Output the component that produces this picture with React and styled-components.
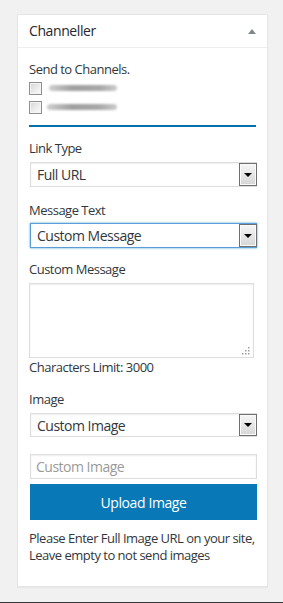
import React from "react";
import styled, { createGlobalStyle } from "styled-components";

const Global = createGlobalStyle`
  html, body { margin: 0; padding: 0; }
  body {
    background: #f1f1f1;
    font-family: "Open Sans", "Noto Sans", sans-serif;
    color: #23282d;
  }
  * { box-sizing: border-box; }
`;

const Page = styled.div`
  display: flex;
  flex-direction: column;
  min-height: 603px;
`;

const Main = styled.div`
  flex: 1;
  padding: 14px 16px 0 17px;
`;

const FooterLine = styled.div`
  height: 1px;
  background: #32373c;
`;

const Panel = styled.section`
  width: 251px;
  background: #fff;
  border: 1px solid #e5e5e5;
  box-shadow: 0 1px 1px rgba(0, 0, 0, 0.04);
`;

const Header = styled.div`
  height: 33px;
  border-bottom: 1px solid #eee;
  display: flex;
  align-items: center;
  justify-content: space-between;
  padding: 0 11px 0 11px;
`;

const Title = styled.h3`
  margin: 0;
  font-size: 14px;
  font-weight: 400;
  line-height: 18px;
  letter-spacing: -0.4px;
  color: #23282d;
`;

const Toggle = styled.span`
  width: 0;
  height: 0;
  border-left: 4px solid transparent;
  border-right: 4px solid transparent;
  border-bottom: 5px solid #82878c;
  margin-top: 1px;
`;

const Content = styled.div`
  padding: 12px 10px 22px 11px;
  display: flex;
  flex-direction: column;
  align-items: flex-start;
`;

const Text = styled.div`
  font-size: 13px;
  line-height: ${(p) => p.$lh || 18}px;
  letter-spacing: -0.5px;
  white-space: nowrap;
  color: #32373c;
  margin-top: ${(p) => p.$top || 0}px;
`;

const CheckRow = styled.label`
  display: flex;
  align-items: flex-start;
  height: 19px;
  padding-top: 4px;
`;

const Check = styled.span`
  width: 13px;
  height: 13px;
  border: 1px solid #8e8f8f;
  box-shadow: inset 0 0 0 1px #f4f4f4;
  background: linear-gradient(135deg, #d4d4d4 0%, #ececec 55%, #fbfbfb 100%);
  flex: none;
`;

const Smear = styled.span`
  width: ${(p) => p.$w}px;
  height: 6px;
  margin: 3px 0 0 ${(p) => p.$ml}px;
  border-radius: 3px;
  background: linear-gradient(90deg, #cfcfcf 0%, #9f9f9f 35%, #a8a8a8 75%, #cccccc 100%);
  filter: blur(1.2px);
`;

const Divider = styled.hr`
  width: 227px;
  height: 2px;
  margin: 9px 0 0 0;
  border: 0;
  background: #0073aa;
`;

const Select = styled.div`
  width: 227px;
  height: ${(p) => p.$h || 25}px;
  margin: ${(p) => p.$top}px 0 0 1px;
  display: flex;
  align-items: center;
  justify-content: space-between;
  padding: 0 0 0 6px;
  background: #fff;
  border: 1px solid ${(p) => (p.$focus ? "#5b9dd9" : "#ddd")};
  box-shadow: ${(p) =>
    p.$focus
      ? "0 0 2px rgba(30,140,190,.8)"
      : "inset 0 1px 2px rgba(0,0,0,.07)"};
  font-size: 14px;
  letter-spacing: -0.5px;
  color: #32373c;
`;

const DropButton = styled.span`
  width: 18px;
  height: 100%;
  margin-right: -1px;
  border: 1px solid #6f6f6f;
  box-shadow: inset 0 0 0 1px #fafafa;
  background: linear-gradient(180deg, #f6f6f6 0%, #e6e6e6 50%, #d6d6d6 100%);
  display: flex;
  align-items: center;
  justify-content: center;
  &::after {
    content: "";
    width: 0;
    height: 0;
    border-left: 4px solid transparent;
    border-right: 4px solid transparent;
    border-top: 4px solid #000;
  }
`;

const TextBox = styled.div`
  width: 225px;
  height: 75px;
  margin-top: 5px;
  border: 1px solid #ddd;
  box-shadow: inset 0 1px 2px rgba(0, 0, 0, 0.07);
  background: #fff;
  display: flex;
  align-items: flex-end;
  justify-content: flex-end;
  padding: 0 3px 2px 0;
`;

const Input = styled.input`
  width: 227px;
  height: 25px;
  margin: 17px 0 0 1px;
  padding: 0 5px;
  border: 1px solid #ddd;
  box-shadow: inset 0 1px 2px rgba(0, 0, 0, 0.07);
  font-family: inherit;
  font-size: 14px;
  letter-spacing: -0.5px;
  color: #32373c;
  outline: none;
  &::placeholder { color: #9a9a9a; }
`;

const Button = styled.button`
  width: 227px;
  height: 36px;
  margin: 5px 0 0 1px;
  border: 0;
  background: #0879b6;
  color: #fff;
  font-family: inherit;
  font-size: 14px;
  letter-spacing: -0.4px;
  padding: 0;
  cursor: pointer;
`;

const Grip = () => (
  <svg width="8" height="8" viewBox="0 0 8 8">
    {[
      [6, 0],
      [3, 3],
      [6, 3],
      [0, 6],
      [3, 6],
      [6, 6],
    ].map(([x, y], i) => (
      <rect key={i} x={x} y={y} width="1.5" height="1.5" fill="#9e9e9e" />
    ))}
  </svg>
);

export default function App() {
  return (
    <Page>
      <Global />
      <Main>
        <Panel>
          <Header>
            <Title>Channeller</Title>
            <Toggle />
          </Header>
          <Content>
            <Text>Send to Channels.</Text>
            <CheckRow>
              <Check />
              <Smear $w={68} $ml={7} />
            </CheckRow>
            <CheckRow>
              <Check />
              <Smear $w={70} $ml={5} />
            </CheckRow>
            <Divider />

            <Text $top={12}>Link Type</Text>
            <Select $top={5}>
              <span>Full URL</span>
              <DropButton />
            </Select>

            <Text $top={14}>Message Text</Text>
            <Select $top={4} $focus>
              <span>Custom Message</span>
              <DropButton />
            </Select>

            <Text $top={12}>Custom Message</Text>
            <TextBox>
              <Grip />
            </TextBox>
            <Text>Characters Limit: 3000</Text>

            <Text $top={14}>Image</Text>
            <Select $top={5} $h={24}>
              <span>Custom Image</span>
              <DropButton />
            </Select>

            <Input placeholder="Custom Image" />
            <Button>Upload Image</Button>

            <Text $top={10} $lh={17}>
              Please Enter Full Image URL on your site,
              <br />
              Leave empty to not send images
            </Text>
          </Content>
        </Panel>
      </Main>
      <FooterLine />
    </Page>
  );
}
